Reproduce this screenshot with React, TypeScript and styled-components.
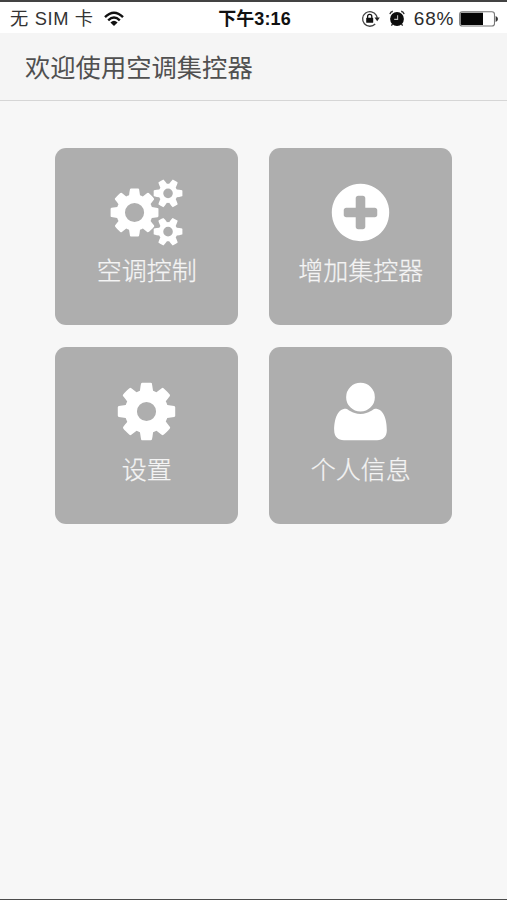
import React from 'react';
import styled, { createGlobalStyle } from 'styled-components';

const GlobalStyle = createGlobalStyle`
  * { box-sizing: border-box; }
  body {
    margin: 0;
    background: #f7f7f7;
    font-family: "Liberation Sans", "Noto Sans CJK SC", sans-serif;
  }
`;

const Screen = styled.div`
  display: flex;
  flex-direction: column;
  width: 507px;
  height: 900px;
  overflow: hidden;
  background: #f7f7f7;
  border-top: 2px solid #434343;
  border-bottom: 1px solid #4c4c4c;
`;

const StatusBar = styled.header`
  display: grid;
  grid-template-columns: 1fr auto 1fr;
  align-items: center;
  height: 31px;
  flex: none;
  padding: 1px 9px 0 10px;
  background: #fff;
  color: #1c1c1c;
  line-height: 30px;
  white-space: nowrap;
`;

const StatusGroup = styled.div<{ $end?: boolean }>`
  display: flex;
  align-items: center;
  justify-content: ${(p) => (p.$end ? 'flex-end' : 'flex-start')};
`;

const Carrier = styled.span`
  font-size: 18.3px;
  letter-spacing: 0.65px;
  margin: 1px 10px 0 0;
  color: #333;
`;

const Clock = styled.span`
  font-size: 18px;
  font-weight: 700;
  letter-spacing: 0.1px;
  padding: 1px 0 0 1px;
  color: #111;
`;

const Percent = styled.span`
  font-size: 19px;
  letter-spacing: 0.7px;
  margin: 1px 5px 0 8px;
  color: #2c2c2c;
`;

const TitleBar = styled.div`
  display: flex;
  align-items: center;
  flex: none;
  height: 68px;
  padding: 2px 0 0 25px;
  background: #f5f5f5;
  border-bottom: 1px solid #d6d6d6;
`;

const Title = styled.h1`
  margin: 0;
  font-size: 25.3px;
  font-weight: 400;
  line-height: 36px;
  color: #505050;
`;

const Menu = styled.main`
  display: grid;
  grid-template-columns: repeat(2, 183.5px);
  grid-auto-rows: 176.5px;
  gap: 22.5px 30.5px;
  padding: 47.2px 0 0 54.5px;
`;

const Tile = styled.button`
  display: flex;
  flex-direction: column;
  align-items: center;
  padding: 31px 0 0;
  border: 0;
  border-radius: 11px;
  background: #aeaeae;
  color: #fff;
  font-family: inherit;
`;

const Glyph = styled.svg`
  width: 67px;
  height: 67px;
  flex: none;
  overflow: visible;
  fill: currentColor;
`;

const Label = styled.span`
  margin: 7px 0 0 1px;
  font-size: 25px;
  font-weight: 300;
  line-height: 36px;
  color: #f4f4f4;
  -webkit-text-stroke: 0.25px #f4f4f4;
`;

const StatusIcon = styled.svg<{ $gap?: number }>`
  display: block;
  flex: none;
  margin-right: ${(p) => p.$gap ?? 0}px;
`;

const SMALL_COG =
  'v140q0 16-149 31-12 27-30 52 51 113 51 138 0 4-4 7-122 71-124 71-8 0-46-47t-52-68q-20 2-30 2t-30-2q-14 21-52 68t-46 47q-2 0-124-71-4-3-4-7 0-25 51-138-18-25-30-52-149-15-149-31v-140q0-16 149-31 13-29 30-52-51-113-51-138 0-4 4-7 4-2 35-20t59-34 30-16q8 0 46 46.5t52 67.5q20-2 30-2t30 2q51-71 92-112l6-2q4 0 124 70 4 3 4 7 0 25-51 138 17 23 30 52 149 15 149 31z';

const paths = {
  cogs:
    'M832 896q0-106-75-181t-181-75-181 75-75 181 75 181 181 75 181-75 75-181zm768 512q0-52-38-90t-90-38-90 38-38 90q0 53 37.5 90.5t90.5 37.5 90.5-37.5 37.5-90.5zm0-1024q0-52-38-90t-90-38-90 38-38 90q0 53 37.5 90.5t90.5 37.5 90.5-37.5 37.5-90.5zm-384 421v185q0 10-7 19.5t-16 10.5l-155 24q-11 35-32 76 34 48 90 115 7 11 7 20 0 12-7 19-23 30-82.5 89.5t-78.5 59.5q-11 0-21-7l-115-90q-37 19-77 31-11 108-23 155-7 24-30 24h-186q-11 0-20-7.5t-10-17.5l-23-153q-34-10-75-31l-118 89q-7 7-20 7-11 0-21-8-144-133-144-160 0-9 7-19 10-14 41-53t47-61q-23-44-35-82l-152-24q-10-1-17-9.5t-7-19.5v-185q0-10 7-19.5t16-10.5l155-24q11-35 32-76-34-48-90-115-7-11-7-20 0-12 7-20 22-30 82-89t79-59q11 0 21 7l115 90q34-18 77-32 11-108 23-154 7-24 30-24h186q11 0 20 7.5t10 17.5l23 153q34 10 75 31l118-89q8-7 20-7 11 0 21 8 144 133 144 160 0 8-7 19-12 16-42 54t-45 60q23 48 34 82l152 23q10 2 17 10.5t7 19.5z' +
    'M1856 1338' + SMALL_COG + 'M1856 314' + SMALL_COG,
  plus:
    'M1344 960v-128q0-26-19-45t-45-19h-256v-256q0-26-19-45t-45-19h-128q-26 0-45 19t-19 45v256h-256q-26 0-45 19t-19 45v128q0 26 19 45t45 19h256v256q0 26 19 45t45 19h128q26 0 45-19t19-45v-256h256q26 0 45-19t19-45zm320-64q0 209-103 385.5t-279.5 279.5-385.5 103-385.5-103-279.5-279.5-103-385.5 103-385.5 279.5-279.5 385.5-103 385.5 103 279.5 279.5 103 385.5z',
  cog:
    'M1152 896q0-106-75-181t-181-75-181 75-75 181 75 181 181 75 181-75 75-181zm512-109v222q0 12-8 23t-20 13l-185 28q-19 54-39 91 35 50 107 138 10 12 10 25t-9 23q-27 37-99 108t-94 71q-12 0-26-9l-138-108q-44 23-91 38-16 136-29 186-7 28-36 28h-222q-14 0-24.5-8.5t-11.5-21.5l-28-184q-49-16-90-37l-141 107q-10 9-25 9-14 0-25-11-126-114-165-168-7-10-7-23 0-12 8-23 15-21 51-66.5t54-70.5q-27-50-41-99l-183-27q-13-2-21-12.5t-8-23.5v-222q0-12 8-23t19-13l186-28q14-46 39-92-40-57-107-138-10-12-10-24 0-10 9-23 26-36 98.5-107.5t94.5-71.5q13 0 26 10l138 107q44-23 91-38 16-136 29-186 7-28 36-28h222q14 0 24.5 8.5t11.5 21.5l28 184q49 16 90 37l142-107q9-9 24-9 13 0 25 10 129 119 165 170 7 8 7 22 0 12-8 23-15 21-51 66.5t-54 70.5q26 50 41 98l183 28q13 2 21 12.5t8 23.5z',
  user:
    'M1600 1400C1600 1570 1500 1664 1340 1664H452C292 1664 192 1570 192 1400C192 1110 275 822 508 822C555 822 660 960 896 960C1132 960 1237 822 1284 822C1517 822 1600 1110 1600 1400ZM1280 512A384 384 0 1 1 512 512A384 384 0 1 1 1280 512Z',
};

const items: { icon: keyof typeof paths; label: string }[] = [
  { icon: 'cogs', label: '空调控制' },
  { icon: 'plus', label: '增加集控器' },
  { icon: 'cog', label: '设置' },
  { icon: 'user', label: '个人信息' },
];

const Wifi = () => (
  <StatusIcon width="20" height="16" viewBox="0 0 20 16">
    <g fill="none" stroke="#111" strokeWidth="2.4">
      <path d="M1 6.2Q10-2.6 19 6.2" />
      <path d="M4.2 9.4Q10 3.8 15.8 9.4" />
    </g>
    <path d="M6.4 11.4Q10 8.2 13.6 11.4L10 15Z" fill="#111" />
  </StatusIcon>
);

const RotationLock = () => (
  <StatusIcon width="19" height="18" viewBox="0 0 19 18" $gap={9}>
    <path d="M15.2 5.2A7.3 7.3 0 1 0 14.2 14M15.2 5.2Q16 6.5 16.1 8" fill="none" stroke="#444" strokeWidth="1.3" />
    <path d="M13.5 7.6H18.8L16.2 11.3Z" fill="#222" />
    <rect x="5.2" y="7.8" width="7" height="5" rx=".6" fill="#111" />
    <path d="M6.6 8V6.5a2.1 2.1 0 0 1 4.2 0V8" fill="none" stroke="#111" strokeWidth="1.3" />
  </StatusIcon>
);

const Alarm = () => (
  <StatusIcon width="16" height="17" viewBox="0 0 16 17" $gap={1}>
    <circle cx="8" cy="9" r="6.9" fill="#0c0c0c" />
    <path d="M.9 4.1Q1.4 1.9 3.8 1.3M15.1 4.1Q14.6 1.9 12.2 1.3" fill="none" stroke="#333" strokeWidth="1.4" />
    <path d="M3.6 13.8L2.4 15.6M12.4 13.8L13.6 15.6" stroke="#222" strokeWidth="1.3" />
    <path d="M8.6 5.2V9.4H5.2" fill="none" stroke="#bbb" strokeWidth="1.1" />
  </StatusIcon>
);

const Battery = () => (
  <StatusIcon width="39" height="16" viewBox="0 0 39 16">
    <rect x=".7" y=".8" width="34.8" height="14.2" rx="2.6" fill="#fff" stroke="#777" strokeWidth="1.1" />
    <path d="M3 1.8H24V14H3Q1.6 14 1.6 12.8V3Q1.6 1.8 3 1.8Z" fill="#050505" />
    <path d="M36.6 5Q39 6 39 8T36.6 11Z" fill="#333" />
  </StatusIcon>
);

export default function App() {
  return (
    <>
      <GlobalStyle />
      <Screen>
        <StatusBar>
          <StatusGroup>
            <Carrier>无 SIM 卡</Carrier>
            <Wifi />
          </StatusGroup>
          <Clock>下午3:16</Clock>
          <StatusGroup $end>
            <RotationLock />
            <Alarm />
            <Percent>68%</Percent>
            <Battery />
          </StatusGroup>
        </StatusBar>
        <TitleBar>
          <Title>欢迎使用空调集控器</Title>
        </TitleBar>
        <Menu>
          {items.map(({ icon, label }) => (
            <Tile key={icon}>
              <Glyph viewBox="0 0 1792 1792" aria-hidden="true">
                <path d={paths[icon]} />
              </Glyph>
              <Label>{label}</Label>
            </Tile>
          ))}
        </Menu>
      </Screen>
    </>
  );
}
